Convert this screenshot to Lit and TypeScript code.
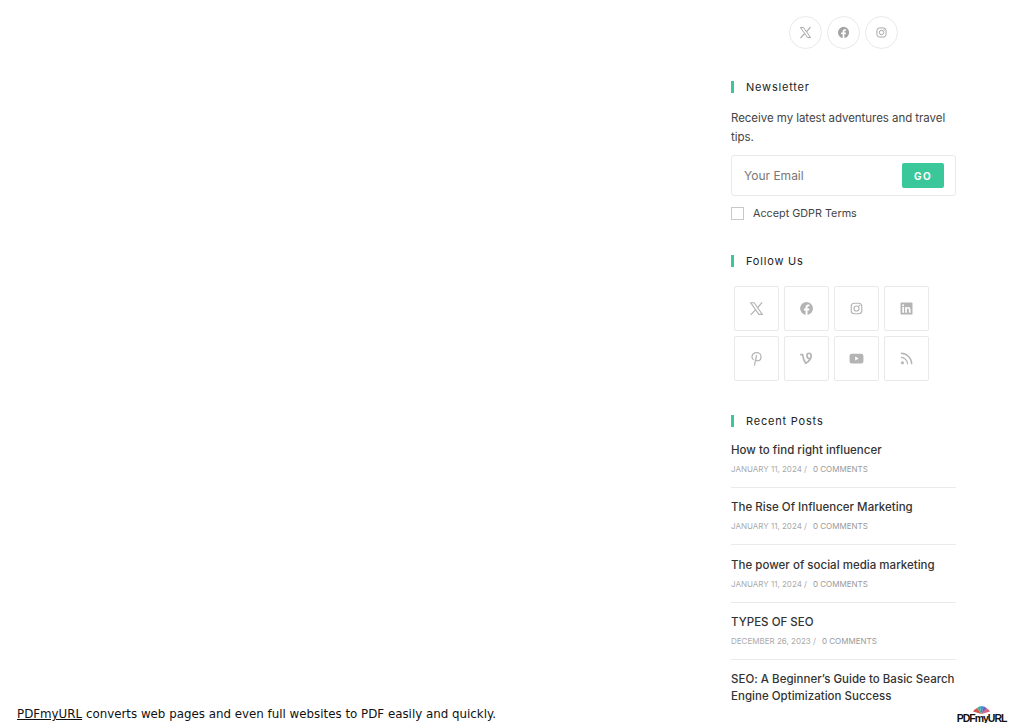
import { LitElement, html, css, svg } from "lit";
import { customElement } from "lit/decorators.js";

const I: Record<string, any> = {
  x: svg`<path d="M1.800 1.800h3.700l8.700 12.400h-3.700z" fill="none" stroke="currentColor" stroke-width="1.200"/><path d="M14 1.400 9.200 7.200M6.800 9.400 1.800 14.800" fill="none" stroke="currentColor" stroke-width="1.300"/>`,
  fb: svg`<path fill="currentColor" fill-rule="evenodd" d="M8 1a7 7 0 0 1 1.100 13.900V10h1.700l.3-2H9.100V6.800c0-.6.3-1.100 1.200-1.100h.9V4c-.5-.1-1-.15-1.500-.15C8.100 3.850 7 4.900 7 6.600V8H5.200v2H7v4.900A7 7 0 0 1 8 1z"/>`,
  ig: svg`<rect x="2.400" y="2.400" width="11.200" height="11.200" rx="3.200" fill="none" stroke="currentColor" stroke-width="1.200"/><circle cx="8" cy="8" r="2.700" fill="none" stroke="currentColor" stroke-width="1.200"/><circle cx="11.200" cy="4.800" r=".8" fill="currentColor"/>`,
  li: svg`<path fill="currentColor" fill-rule="evenodd" d="M2.500 1.600h11a.9.9 0 0 1 .9.9v11a.9.9 0 0 1-.9.9h-11a.9.9 0 0 1-.9-.9v-11a.9.9 0 0 1 .9-.9zM3.500 6.500v5.900h1.800V6.500zM4.400 3.500a1 1 0 1 0 0 2.100 1 1 0 0 0 0-2.100zM6.600 6.500v5.900h1.800V9.400c0-.8.300-1.400 1.100-1.400.8 0 1 .6 1 1.400v3h1.800V9c0-1.600-.8-2.600-2.200-2.600-.8 0-1.400.4-1.700.9v-.8z"/>`,
  pin: svg`<path fill="none" stroke="currentColor" stroke-width="1.300" stroke-linecap="round" d="M4.600 9.200C3.600 8.400 3.200 7.200 3.200 6.100c0-2.600 2.200-4.400 4.900-4.400 2.700 0 4.700 1.800 4.700 4.200 0 2.700-1.500 4.600-3.500 4.600-1 0-1.800-.5-2.100-1.300M8.100 4.800 5.800 15"/>`,
  vine: svg`<path fill="none" stroke="currentColor" stroke-width="1.800" stroke-linejoin="round" stroke-linecap="round" d="M2 3.800h1.800c.5 3.400 1.300 6.700 3.400 9.400 2.800-1.700 5.800-4.800 5.800-7.900 0-1.700-.9-2.900-2.300-2.900-1.400 0-2.200 1.300-2.200 2.700 0 1.700 1 3.200 3 3"/>`,
  yt: svg`<path fill="currentColor" fill-rule="evenodd" d="M3 2.800h10a2.400 2.400 0 0 1 2.400 2.400v5.600a2.400 2.400 0 0 1-2.400 2.400H3a2.400 2.400 0 0 1-2.400-2.400V5.200A2.400 2.400 0 0 1 3 2.800zM6.600 5.800v4.400L10.400 8z"/>`,
  rss: svg`<circle cx="3.600" cy="12.400" r="1.600" fill="currentColor"/><path fill="none" stroke="currentColor" stroke-width="1.400" d="M2 6.800A7.200 7.200 0 0 1 9.200 14M2 2.400A11.600 11.600 0 0 1 13.600 14"/>`,
};
const icon = (k: string, s: number) =>
  html`<svg width=${s} height=${s} viewBox="0 0 16 16">${I[k]}</svg>`;

const posts = [
  ["How to find right influencer", "JANUARY 11, 2024"],
  ["The Rise Of Influencer Marketing", "JANUARY 11, 2024"],
  ["The power of social media marketing", "JANUARY 11, 2024"],
  ["TYPES OF SEO", "DECEMBER 26, 2023"],
  ["SEO: A Beginner’s Guide to Basic Search Engine Optimization Success", ""],
];

@customElement("app-root")
export class AppRoot extends LitElement {
  static styles = css`
    :host {
      display: block;
      position: relative;
      height: 723px;
      overflow: hidden;
      background: #fff;
      font-family: Inter, "Liberation Sans", sans-serif;
      color: #333;
    }
    .side {
      width: 225px;
      margin-left: 731px;
      padding-top: 16px;
    }
    .circles { display: flex; justify-content: center; gap: 5px; }
    .circle {
      width: 33px; height: 33px; box-sizing: border-box;
      border: 1px solid #e9e9e9; border-radius: 50%;
      display: flex; align-items: center; justify-content: center;
      color: #a4a4a4;
    }
    h4 {
      margin: 0;
      font-size: 11px;
      font-weight: 400;
      letter-spacing: .8px;
      line-height: 12px;
      height: 12px;
      color: #222;
      display: flex;
      align-items: center;
      border-left: 3px solid #3ac89a;
      padding-left: 12px;
    }
    .news { margin-top: 32px; }
    .news p {
      margin: 16px 0 0;
      font-size: 11.500px;
      line-height: 19px;
      color: #444;
      letter-spacing: -0.05px;
    }
    .form {
      margin-top: 8px;
      height: 41px; box-sizing: border-box;
      border: 1px solid #e9e9e9; border-radius: 3px;
      display: flex; align-items: center; justify-content: space-between;
      padding: 0 11px 0 12px;
      font-size: 12px; color: #777;
    }
    .go {
      width: 42px; height: 25px; border-radius: 2px;
      background: #3ac89a; color: #fff;
      font-size: 10px; font-weight: 700; letter-spacing: 1.300px;
      display: flex; align-items: center; justify-content: center;
    }
    .gdpr {
      margin-top: 11px;
      display: flex; align-items: center; gap: 9px;
      font-size: 10.800px; color: #444; line-height: 13px;
    }
    .box { width: 13px; height: 13px; box-sizing: border-box; border: 1px solid #c9c9c9; }
    .follow { margin-top: 35px; }
    .grid {
      margin: 19px 0 0 3px;
      display: grid;
      grid-template-columns: repeat(4, 45px);
      grid-auto-rows: 45px;
      gap: 5px;
    }
    .tile {
      box-sizing: border-box;
      border: 1px solid #e9e9e9; border-radius: 2px;
      display: flex; align-items: center; justify-content: center;
      color: #b4b4b4;
    }
    .recent { margin-top: 34px; }
    .post { padding-bottom: 11px; border-bottom: 1px solid #eaeaea; margin-bottom: 11.300px; }
    .post:first-of-type { margin-top: 15px; }
    .post:last-child { border: 0; }
    .title {
      font-size: 11.500px; line-height: 17px; font-weight: 500; color: #333;
      letter-spacing: .02px;
    }
    .meta {
      margin-top: 3px;
      font-size: 8px; line-height: 14px; color: #aaa;
      display: flex; gap: 6px;
    }
    .meta .c { color: #999; }
    .footer {
      position: absolute; left: 17px; bottom: 1px;
      font: 11.850px/16px "DejaVu Sans", sans-serif; color: #111;
    }
    .footer a { color: inherit; }
    .logo {
      position: absolute; right: 17px; bottom: 0;
      width: 49px; height: 17px;
      font: 700 10.500px/10px "Liberation Sans", sans-serif;
      letter-spacing: -1px;
      color: #111;
      display: flex; flex-direction: column; align-items: center;
    }
    .logo svg { display: block; margin-bottom: -1px; }
  `;

  render() {
    return html`
      <div class="side">
        <div class="circles">
          ${["x", "fb", "ig"].map((k) => html`<div class="circle">${icon(k, 13)}</div>`)}
        </div>
        <section class="news">
          <h4>Newsletter</h4>
          <p>Receive my latest adventures and travel tips.</p>
          <div class="form"><span>Your Email</span><div class="go">GO</div></div>
          <div class="gdpr"><span class="box"></span>Accept GDPR Terms</div>
        </section>
        <section class="follow">
          <h4>Follow Us</h4>
          <div class="grid">
            ${["x", "fb", "ig", "li", "pin", "vine", "yt", "rss"].map(
              (k) => html`<div class="tile">${icon(k, 15)}</div>`
            )}
          </div>
        </section>
        <section class="recent">
          <h4>Recent Posts</h4>
          ${posts.map(
            ([t, d]) => html`<div class="post">
              <div class="title">${t}</div>
              ${d
                ? html`<div class="meta"><span>${d} /</span><span class="c">0 COMMENTS</span></div>`
                : ""}
            </div>`
          )}
        </section>
      </div>
      <div class="footer"><a href="#">PDFmyURL</a> converts web pages and even full websites to PDF easily and quickly.</div>
      <div class="logo">
        <svg width="17" height="8" viewBox="0 0 17 8">
          <path d="M8.500 8 0 5.500a9 9 0 0 1 4-3.500z" fill="#d9534f"/>
          <path d="M8.500 8 4 2a9 9 0 0 1 3-1.700z" fill="#3fb58a"/>
          <path d="M8.500 8 7 .3a9 9 0 0 1 3.500 0z" fill="#3d8fd0"/>
          <path d="M8.500 8l2-7.700A9 9 0 0 1 14 2.500z" fill="#7a5fb5"/>
          <path d="M8.500 8 14 2.500a9 9 0 0 1 3 3z" fill="#d9607f"/>
        </svg>
        <span>PDFmyURL</span>
      </div>
    `;
  }
}
